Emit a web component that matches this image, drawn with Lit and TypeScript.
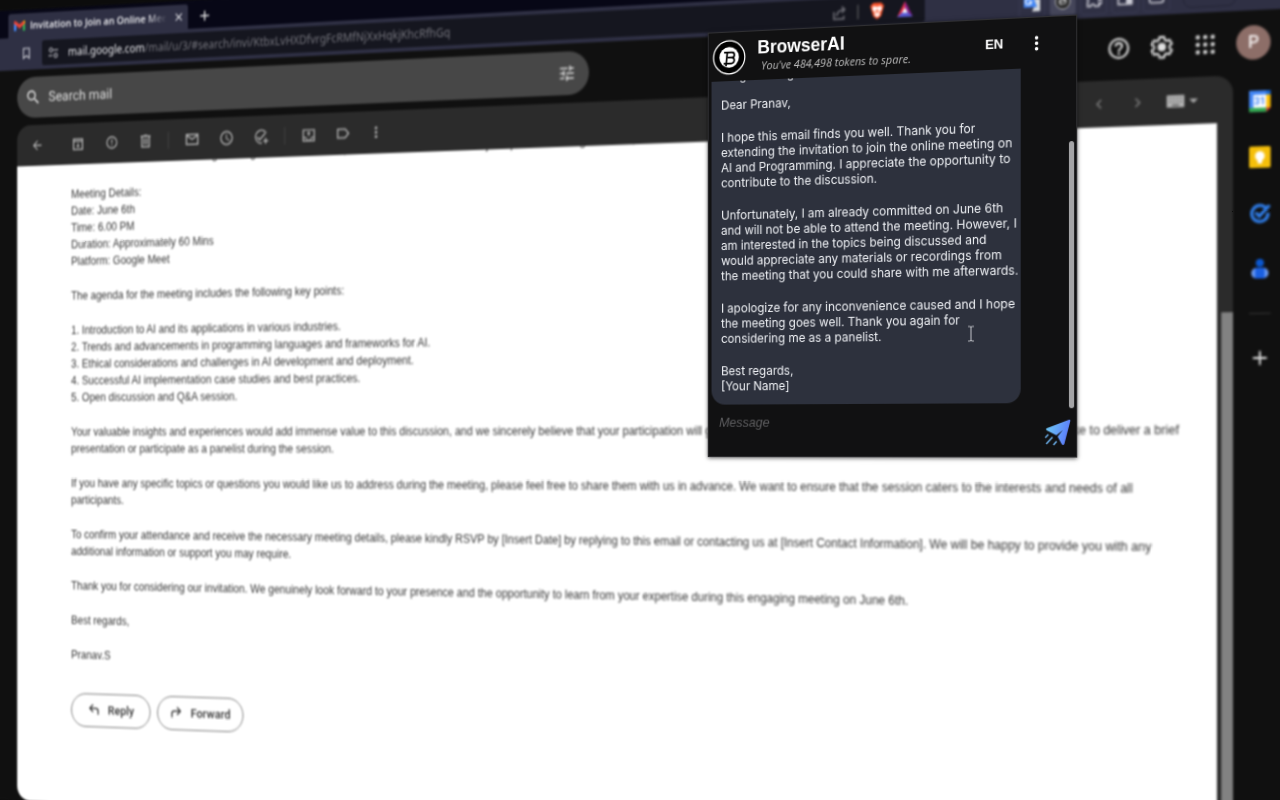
import { LitElement, html, css, svg } from "lit";
import { customElement } from "lit/decorators.js";

const paths: Record<string, string> = {
  back: "M20 11H7.8l5.6-5.6L12 4l-8 8 8 8 1.4-1.4L7.8 13H20z",
  archive: "M2 2h20v20H2zM4.500 8v11.500h15V8zM4.500 4.500V6h15V4.500zM11 10h2v4h3l-4 4-4-4h3z",
  spam: "M12 2a10 10 0 1 0 0 20 10 10 0 0 0 0-20zm0 18a8 8 0 1 1 0-16 8 8 0 0 1 0 16zM11 7h2v6h-2zM11 15h2v2h-2z",
  trash: "M9 3v1H4v2h1v15h14V6h1V4h-5V3zM7 6h10v13H7zM9 8h2v9H9zM13 8h2v9h-2z",
  mail: "M2 4h20v16H2zM4 8v10h16V8l-8 5zM4.5 6l7.5 4.700L19.500 6z",
  clock: "M12 2a10 10 0 1 0 0 20 10 10 0 0 0 0-20zm0 18a8 8 0 1 1 0-16 8 8 0 0 1 0 16zM12.500 7H11v6l5.200 3.200.8-1.300-4.500-2.700z",
  task: "M21.500 8.500A10 10 0 1 0 13 22v-2a8 8 0 1 1 5.500-12.700l1.500-1.400zM6.500 11.500L5 13l4.500 4.500L21 6l-1.500-1.500-10 10zM18 14h2v3h3v2h-3v3h-2v-3h-3v-2h3z",
  move: "M2 3h20v18H2zM4 5v9h4a4 4 0 0 0 8 0h4V5zM4 16v3h16v-3h-2.500a6 6 0 0 1-11 0zM11 13V9.500H8.500L12 6l3.500 3.500H13V13z",
  label: "M3 5h13l6 7-6 7H3zM5 7v10h10l4.300-5L15 7z",
  more: "M12 8a2 2 0 1 0 0-4 2 2 0 0 0 0 4zm0 2a2 2 0 1 0 0 4 2 2 0 0 0 0-4zm0 6a2 2 0 1 0 0 4 2 2 0 0 0 0-4z",
  prev: "M15.400 7.400L14 6l-6 6 6 6 1.400-1.400L10.800 12z",
  next: "M8.600 7.400L10 6l6 6-6 6-1.400-1.400L13.200 12z",
  keyboard: "M2 5h20v14H2zM5 8v1h2V8zM9 8v1h2V8zM13 8v1h2V8zM17 8v1h2V8zM5 12v1h2v-1zM9 12v1h2v-1zM13 12v1h2v-1zM17 12v1h2v-1zM8 16v1h8v-1z",
  drop: "M5 9l7 7 7-7z",
  search: "M15.500 14h-.8l-.3-.3A6.500 6.500 0 1 0 13.700 14.400l.3.300v.8l5 5 1.500-1.500zm-6 0a4.500 4.500 0 1 1 0-9 4.500 4.500 0 0 1 0 9z",
  tune: "M3 17v2h6v-2zM3 5v2h10V5zM13 21v-2h8v-2h-8v-2h-2v6zM7 9v2H3v2h4v2h2V9zM21 13v-2H11v2zM15 9h2V7h4V5h-4V3h-2z",
  help: "M11 18h2v-2h-2zM12 2a10 10 0 1 0 0 20 10 10 0 0 0 0-20zm0 18a8 8 0 1 1 0-16 8 8 0 0 1 0 16zm0-14a4 4 0 0 0-4 4h2a2 2 0 1 1 4 0c0 2-3 1.750-3 5h2c0-2.250 3-2.500 3-5a4 4 0 0 0-4-4z",
  reply: "M7.800 10l3.600 3.600L10 15 4 9l6-6 1.400 1.400L7.800 8H15a5 5 0 0 1 5 5v5h-2v-5a3 3 0 0 0-3-3z",
  forward: "M16.200 10l-3.600 3.600L14 15l6-6-6-6-1.400 1.400L16.200 8H9a5 5 0 0 0-5 5v5h2v-5a3 3 0 0 1 3-3z",
  plus: "M19 13h-6v6h-2v-6H5v-2h6V5h2v6h6z",
  close: "M19 6.400L17.600 5 12 10.600 6.400 5 5 6.400 10.600 12 5 17.600 6.400 19 12 13.400 17.600 19 19 17.600 13.400 12z",
  bookmark: "M5 2h14v20l-7-5-7 5zM7 4v14l5-3.500L17 18V4z",
};

const icon = (name: string, size = 20) => html`<svg
  width=${size} height=${size} viewBox="0 0 24 24" fill="currentColor" fill-rule="evenodd" aria-hidden="true"
>${svg`<path d=${paths[name]} />`}</svg>`;

const base = css`
  * { box-sizing: border-box; }
  svg { display: block; flex: none; }
  button { font: inherit; color: inherit; background: none; border: 0; padding: 0; margin: 0; display: flex; align-items: center; justify-content: center; }
  input { font: inherit; color: inherit; background: none; border: 0; padding: 0; margin: 0; min-width: 0; outline: none; }
  a { color: inherit; text-decoration: none; }
`;

@customElement("browser-bar")
class BrowserBar extends LitElement {
  static styles = [base, css`
    :host { display: block; font-family: "Noto Sans", "Open Sans", sans-serif; color: #c9c9d2; }
    .strip { display: flex; align-items: flex-end; height: 30px; padding-left: 20px; background: #070716; }
    .tab { display: flex; align-items: center; width: 220px; height: 26px; padding: 0 4px 0 7px; gap: 6px; background: #2f3044; border-radius: 3px 3px 0 0; color: #f2f2f5; }
    .title { flex: 1; overflow: hidden; white-space: nowrap; font-family: "Open Sans", sans-serif; font-size: 11px; line-height: 18px; font-weight: 600; mask-image: linear-gradient(90deg, #000 84%, transparent 99%); }
    .new { width: 40px; height: 26px; color: #eee; }
    .nav { display: flex; align-items: center; height: 35px; padding: 0 44px 0 32px; background: #2f3044; }
    .mark { width: 20px; }
    .url { display: flex; align-items: center; flex: 1; height: 27px; margin: 0 93px 0 10px; padding: 0 11px 0 8px; gap: 10px; background: #15161f; border-radius: 3px; font-size: 12px; line-height: 18px; color: #74747c; }
    .link { flex: 1; padding-left: 2px; white-space: nowrap; }
    .host { color: #e6e6ea; }
    .rule { width: 1px; height: 14px; background: #666; }
    .tools { display: flex; align-items: center; gap: 4px; }
    .tool { width: 26px; height: 28px; border: 1px solid #393a50; border-radius: 3px; }
    .on { background: #45465a; }
    .vpn { width: 50px; height: 24px; margin-left: 8px; border: 1px solid #242536; border-radius: 8px; }
  `];

  render() {
    return html`
      <div class="strip">
        <div class="tab">
          <svg width="14" height="12" viewBox="0 0 28 22"><path d="M0 4v18h6V9z" fill="#4285f4"/><path d="M28 4v18h-6V9z" fill="#34a853"/><path d="M22 3v8l6-5V3c0-3-3-4-6 0z" fill="#fbbc04"/><path d="M0 3v3l14 11L28 6 22 2l-8 6-8-6C3 0 0 0 0 3z" fill="#ea4335"/></svg>
          <span class="title">Invitation to Join an Online Meet</span>
          <button aria-label="Close tab">${icon("close", 14)}</button>
        </div>
        <button class="new" aria-label="New tab">${icon("plus", 18)}</button>
      </div>
      <div class="nav">
        <button class="mark" aria-label="Bookmark">${icon("bookmark", 15)}</button>
        <div class="url">
          <svg width="12" height="14" viewBox="0 0 12 14" fill="none" stroke="#a0a0a8" stroke-width="1.300"><circle cx="3" cy="4" r="2"/><path d="M6 4h6M0 10h5"/><circle cx="9" cy="10" r="2"/></svg>
          <a class="link" href="#search"><span class="host">mail.google.com</span>/mail/u/3/#search/invi/KtbxLvHXDfvrgFcRMfNjXxHqkjKhcRfhGq</a>
          <svg width="16" height="16" viewBox="0 0 16 16" fill="none" stroke="#74747c" stroke-width="1.500"><path d="M2 7v7h10v-3M5 11c0-4 3-6 8-6M10 2l3 3-3 3"/></svg>
          <span class="rule"></span>
          <svg width="18" height="18" viewBox="0 0 18 18"><path d="M5 1h8l3 3-1 3-2 7-4 3-4-3-2-7-1-3z" fill="#fb542b"/><path d="M5 4l4 1 4-1 1 3-3 4 1 2-3 2-3-2 1-2-3-4z" fill="#fff"/><path d="M9 7v5M7 9h4" stroke="#fb542b"/></svg>
          <svg width="18" height="18" viewBox="0 0 18 18"><path d="M9 1l4 7H9L6 12 1 16z" fill="#e5304c"/><path d="M9 1l8 15-5-4-3-5z" fill="#8a1f8f"/><path d="M1 16l5-4h6l5 4z" fill="#5b5bd6"/><path d="M9 7l3 5H6z" fill="#fff"/></svg>
        </div>
        <div class="tools">
          <button class="tool" aria-label="Translate"><svg width="18" height="18" viewBox="0 0 18 18"><path d="M1 1h10l3 12H1z" fill="#4285f4"/><path d="M11 5h6v12H9l2-4h3z" fill="#d5d8dd"/><path d="M8 5.500A3 3 0 1 0 8.500 8H6" fill="none" stroke="#fff" stroke-width="1.300"/></svg></button>
          <button class="tool on" aria-label="BrowserAI"><svg width="16" height="16" viewBox="0 0 16 16"><circle cx="8" cy="8" r="7" fill="#111" stroke="#ccc"/><circle cx="8" cy="8" r="4" fill="#bbb"/><path d="M7 5v6h3V8H7" fill="none" stroke="#111"/></svg></button>
          <button class="tool" aria-label="Extensions"><svg width="16" height="16" viewBox="0 0 16 16" fill="none" stroke="currentColor" stroke-width="1.600"><path d="M2 4h3a2 2 0 1 1 4 0h4v4a2 2 0 1 1 0 3v3H9a2 2 0 0 0-4 0H2v-4a2 2 0 0 0 0-3z"/></svg></button>
          <button class="tool" aria-label="Side panel"><svg width="16" height="16" viewBox="0 0 16 16"><path d="M1.500 2.500h13v11h-13z" fill="none" stroke="currentColor" stroke-width="1.600"/><path d="M9 2h6v12H9z" fill="currentColor"/></svg></button>
          <button class="tool" aria-label="Wallet"><svg width="16" height="16" viewBox="0 0 16 16"><rect x="1.500" y="2.500" width="13" height="11" rx="2" fill="none" stroke="currentColor" stroke-width="1.600"/></svg></button>
          <button class="vpn" aria-label="VPN"></button>
        </div>
      </div>`;
  }
}

@customElement("mail-page")
class MailPage extends LitElement {
  static styles = [base, css`
    :host { display: flex; flex-direction: column; flex: 1; gap: 8px; padding: 8px 0 0 31px; background: #101010; font-family: Roboto, sans-serif; color: #b4b4b4; }
    .head { display: flex; align-items: center; justify-content: space-between; height: 44px; padding-right: 12px; }
    .search { display: flex; align-items: center; width: 49.4%; height: 44px; padding: 0 14px 0 10px; gap: 9px; border-radius: 22px; background: #474747; color: #e4e4e4; }
    .field { flex: 1; font-size: 15px; line-height: 24px; }
    .field::placeholder { color: #dedede; opacity: 1; }
    .apps { display: flex; align-items: center; gap: 17px; color: #e2e2e2; }
    .avatar { width: 32px; height: 32px; border-radius: 50%; background: #8d6e68; color: #f3eeee; font-size: 16px; line-height: 32px; font-weight: 500; }
    .body { display: flex; flex: 1; }
    .panel { display: flex; flex-direction: column; flex: 1; border-radius: 16px; background: #2b2b2b; overflow: hidden; }
    .bar { display: flex; align-items: center; height: 44px; padding: 0 22px 0 4px; }
    .bar button { width: 41px; height: 44px; }
    .bar .first { margin-right: 10px; }
    .bar .near { width: 38px; }
    .bar .sep { width: 1px; height: 18px; margin: 0 7px; background: #444; }
    .fill { flex: 1; }
    .bar .dim { width: 37px; color: #7a7a7a; }
    .bar .keys { width: 50px; }
    .scroll { display: flex; flex: 1; gap: 4px; }
    .sheet { flex: 1; height: 100%; overflow: hidden; background: #fff; color: #363636; padding: 0 20px 0 67px; font-family: "Liberation Sans", Arial, sans-serif; font-size: 12px; line-height: 18px; }
    .track { width: 11px; padding-top: 177px; display: flex; }
    .thumb { flex: 1; background: #828282; }
    .sheet .cut { margin-top: -14px; white-space: nowrap; }
    p { margin: 19px 0 0; }
    .list { margin: 19px 0 0; padding: 0; list-style: none; }
    .acts { display: flex; gap: 8px; margin-top: 32px; font-family: Roboto, sans-serif; font-size: 13px; line-height: 18px; font-weight: 500; }
    .pill { height: 36px; padding: 0 19px 0 18px; gap: 8px; border: 1px solid #757575; border-radius: 18px; }
    .pill + .pill { padding: 0 14px 0 13px; }
    .rail { display: flex; flex-direction: column; align-items: center; width: 47px; padding: 14px 0 0 3px; gap: 30px; color: #dcdcdc; }
    .line { width: 20px; height: 1px; background: #333; }
  `];

  render() {
    return html`
      <div class="head">
        <label class="search">${icon("search", 20)}<input class="field" type="text" placeholder="Search mail" aria-label="Search mail" />${icon("tune", 20)}</label>
        <div class="apps">
          <button aria-label="Help">${icon("help", 24)}</button>
          <button aria-label="Settings"><svg width="24" height="24" viewBox="0 0 24 24" fill="none" stroke="currentColor" stroke-width="2" stroke-linejoin="round"><path d="M9.800 3h4.400l.5 2.700 2 1.200 2.600-.9 2.200 3.800-2.100 1.800v2.400l2.100 1.800-2.200 3.800-2.600-.9-2 1.200-.5 2.600H9.800l-.5-2.600-2-1.200-2.600.9-2.200-3.800 2.100-1.800v-2.400L2.500 9.800 4.700 6l2.600.9 2-1.200z"/><circle cx="12" cy="12.500" r="3" fill="currentColor"/></svg></button>
          <button aria-label="Google apps"><svg width="24" height="24" viewBox="0 0 24 24" fill="currentColor">${[5, 12, 19].map(y => [5, 12, 19].map(x => svg`<circle cx=${x} cy=${y} r="2"/>`))}</svg></button>
          <button class="avatar" aria-label="Account">P</button>
        </div>
      </div>
      <div class="body">
        <main class="panel">
          <div class="bar">
            <button class="first" aria-label="Back">${icon("back", 16)}</button>
            <button aria-label="Archive">${icon("archive", 15)}</button>
            <button aria-label="Report spam">${icon("spam", 16)}</button>
            <button aria-label="Delete">${icon("trash", 18)}</button>
            <span class="sep"></span>
            <button aria-label="Mark as unread">${icon("mail", 18)}</button>
            <button aria-label="Snooze">${icon("clock", 18)}</button>
            <button aria-label="Add to tasks">${icon("task", 18)}</button>
            <span class="sep"></span>
            <button aria-label="Move to">${icon("move", 17)}</button>
            <button class="near" aria-label="Labels">${icon("label", 18)}</button>
            <button class="near" aria-label="More">${icon("more", 18)}</button>
            <span class="fill"></span>
            <button class="dim" aria-label="Newer">${icon("prev", 18)}</button>
            <button class="dim" aria-label="Older">${icon("next", 18)}</button>
            <button class="keys" aria-label="Input tools">${icon("keyboard", 20)}${icon("drop", 14)}</button>
          </div>
          <div class="scroll">
            <article class="sheet">
              <p class="cut">We would like to invite our distinguished guest to this session, where we will discuss the major topics in teaching and data, and more ideas,</p>
              <p>Meeting Details:<br />Date: June 6th<br />Time: 6.00 PM<br />Duration: Approximately 60 Mins<br />Platform: Google Meet</p>
              <p>The agenda for the meeting includes the following key points:</p>
              <ul class="list">
                <li>1. Introduction to AI and its applications in various industries.</li>
                <li>2. Trends and advancements in programming languages and frameworks for AI.</li>
                <li>3. Ethical considerations and challenges in AI development and deployment.</li>
                <li>4. Successful AI implementation case studies and best practices.</li>
                <li>5. Open discussion and Q&amp;A session.</li>
              </ul>
              <p>Your valuable insights and experiences would add immense value to this discussion, and we sincerely believe that your participation will greatly benefit all of our participants. Please let us know if you would like to deliver a brief presentation or participate as a panelist during the session.</p>
              <p>If you have any specific topics or questions you would like us to address during the meeting, please feel free to share them with us in advance. We want to ensure that the session caters to the interests and needs of all participants.</p>
              <p>To confirm your attendance and receive the necessary meeting details, please kindly RSVP by [Insert Date] by replying to this email or contacting us at [Insert Contact Information]. We will be happy to provide you with any additional information or support you may require.</p>
              <p>Thank you for considering our invitation. We genuinely look forward to your presence and the opportunity to learn from your expertise during this engaging meeting on June 6th.</p>
              <p>Best regards,</p>
              <p>Pranav.S</p>
              <div class="acts">
                <button class="pill">${icon("reply", 18)}Reply</button>
                <button class="pill">${icon("forward", 18)}Forward</button>
              </div>
            </article>
            <div class="track"><div class="thumb"></div></div>
          </div>
        </main>
        <aside class="rail">
          <svg width="22" height="22" viewBox="0 0 22 22"><path d="M1 1h16v4H5v12H1z" fill="#4285f4"/><path d="M17 1h4v4h-4z" fill="#1967d2"/><path d="M17 5h4v12h-4z" fill="#fbbc04"/><path d="M1 17h16v4H1z" fill="#34a853"/><path d="M17 17h4l-4 4z" fill="#ea4335"/><path d="M5 5h12v12H5z" fill="#fff"/><text x="11" y="14.500" font-family="Roboto, sans-serif" font-size="9" font-weight="700" text-anchor="middle" fill="#4285f4">31</text></svg>
          <svg width="22" height="22" viewBox="0 0 22 22"><rect x="1" y="1" width="20" height="20" rx="1.500" fill="#f5bf0a"/><circle cx="11" cy="10" r="4.500" fill="#fff"/><path d="M9 13h4v4H9z" fill="#fff"/></svg>
          <svg width="22" height="22" viewBox="0 0 22 22" fill="none" stroke="#2f7de9" stroke-width="3"><path d="M17 7a7.500 7.500 0 1 0 1.500 4"/><path d="M7 10.500l3.500 3.500L20 4"/></svg>
          <svg width="22" height="22" viewBox="0 0 22 22"><circle cx="11" cy="5.500" r="3.800" fill="#0b57d0"/><rect x="3" y="10" width="16" height="10" rx="5" fill="#6c9cf5"/><path d="M6.500 10h9v10h-9z" fill="#1a5fe0"/></svg>
          <span class="line"></span>
          <button aria-label="Get add-ons">${icon("plus", 22)}</button>
        </aside>
      </div>`;
  }
}

@customElement("ai-popup")
class AiPopup extends LitElement {
  static styles = [base, css`
    :host { display: flex; flex-direction: column; background: #111112; border: 1px solid #303033; box-shadow: 0 1px 4px rgba(0, 0, 0, 0.6); color: #fff; font-family: "Liberation Sans", Arial, sans-serif; }
    .head { display: flex; align-items: center; height: 48px; padding: 0 28px 0 4px; gap: 12px; }
    .names { flex: 1; }
    .name { margin: 0; font-size: 18px; line-height: 20px; font-weight: 700; }
    .left { padding-left: 4px; font-family: "Open Sans", "Noto Sans", sans-serif; font-size: 11px; line-height: 16px; font-style: italic; white-space: nowrap; color: #b9b9b9; }
    .lang { margin-right: 10px; font-size: 13px; line-height: 16px; font-weight: 700; }
    .chat { position: relative; display: flex; justify-content: space-between; height: 320px; padding: 0 2px 0 3px; }
    .bubble { width: 314px; overflow: hidden; padding: 0 0 0 10px; background: #2d313d; border-radius: 0 0 14px 14px; color: #eef0f4; font-size: 12px; line-height: 15px; font-family: Inter, "Liberation Sans", sans-serif; white-space: nowrap; }
    .bubble p { margin: 17px 0 0; }
    .bubble .cut { margin: -13px 0 -3px; }
    .thumb { width: 5px; height: 254px; margin-top: 71px; border-radius: 3px; background: #a4a4a6; }
    .beam { position: absolute; left: 264px; top: 245px; }
    .write { display: flex; align-items: center; flex: 1; padding: 0 5px 16px 11px; }
    .field { flex: 1; font-size: 13px; line-height: 16px; font-style: italic; }
    .field::placeholder { color: #5c5c5e; opacity: 1; }
    .send { padding-top: 8px; margin-bottom: -12px; }
  `];

  render() {
    return html`
      <header class="head">
        <svg width="35" height="35" viewBox="0 0 36 36"><circle cx="18" cy="18" r="16.800" fill="#000" stroke="#fff" stroke-width="1.300"/><circle cx="18" cy="18" r="10.500" fill="#fff"/><path d="M12.500 13h8.500a2.600 2.600 0 0 1 0 5.200h-4.500M20.500 18.200a3 3 0 0 1 0 6h-7M16 13l-1.500 14M12 24.200h3" fill="none" stroke="#000" stroke-width="1.800"/></svg>
        <div class="names">
          <h1 class="name">BrowserAI</h1>
          <div class="left">You've 484,498 tokens to spare.</div>
        </div>
        <button class="lang">EN</button>
        <button aria-label="Menu">${icon("more", 21)}</button>
      </header>
      <section class="chat">
        <div class="bubble">
          <p class="cut">Programming</p>
          <p>Dear Pranav,</p>
          <p>I hope this email finds you well. Thank you for<br />extending the invitation to join the online meeting on<br />AI and Programming. I appreciate the opportunity to<br />contribute to the discussion.</p>
          <p>Unfortunately, I am already committed on June 6th<br />and will not be able to attend the meeting. However, I<br />am interested in the topics being discussed and<br />would appreciate any materials or recordings from<br />the meeting that you could share with me afterwards.</p>
          <p>I apologize for any inconvenience caused and I hope<br />the meeting goes well. Thank you again for<br />considering me as a panelist.</p>
          <p>Best regards,<br />[Your Name]</p>
        </div>
        <div class="thumb"></div>
        <svg class="beam" width="8" height="16" viewBox="0 0 8 16" fill="none" stroke="#a9abb2" stroke-width="1.200"><path d="M1 1h2l1 1 1-1h2M4 2v12M1 15h2l1-1 1 1h2"/></svg>
      </section>
      <div class="write">
        <input class="field" type="text" placeholder="Message" aria-label="Message" />
        <button class="send" aria-label="Send"><svg width="26" height="26" viewBox="0 0 26 26"><defs><linearGradient id="g" x1="0" y1="0" x2="1" y2="0.300"><stop offset="0" stop-color="#6fd0f5"/><stop offset="1" stop-color="#5b7cfa"/></linearGradient></defs><path d="M2.500 9L24 1c1-.3 1.500.2 1.300 1.200L19.500 24c-.4 1.200-1.800 1.400-2.500.3l-4-7.300 5-6.200-6.200 5-9-4.600C1.500 10.600 1.500 9.500 2.500 9z" fill="url(#g)"/><path d="M1 18l3-3M2 24l6-6.500M9 25l3-3.500" stroke="#6fb7f5" stroke-width="1.300" fill="none"/></svg></button>
      </div>`;
  }
}

@customElement("app-root")
class AppRoot extends LitElement {
  static styles = css`
    :host { display: flow-root; height: 100vh; overflow: hidden; background: #0c0c0c; }
    /* The whole screen is one plane, turned so that its right side comes nearer. */
    .plane { position: relative; height: calc(100vh + 54px); margin: -25px 0 0 -112px; transform-origin: calc(50% + 56px) 470px; transform: perspective(3200px) rotateY(-21deg); }
    .window { display: flex; flex-direction: column; height: 100%; filter: blur(0.8px); }
    .popup { position: absolute; top: 61px; right: 195px; width: 371px; height: 419px; }
  `;

  render() {
    return html`
      <div class="plane">
        <div class="window">
          <browser-bar></browser-bar>
          <mail-page></mail-page>
        </div>
        <ai-popup class="popup"></ai-popup>
      </div>`;
  }
}
